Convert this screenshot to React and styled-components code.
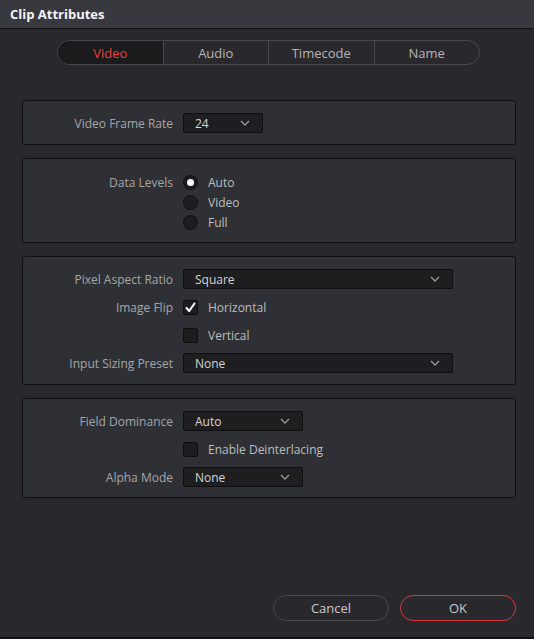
import styled, { createGlobalStyle } from "styled-components";

const GlobalStyle = createGlobalStyle`
    * { box-sizing: border-box; }
    body {
        margin: 0;
        background: #28282d;
        font-family: 'Open Sans', 'Liberation Sans', sans-serif;
    }
`

function Chevron() {
    return (
        <svg width="10" height="6" viewBox="0 0 10 6">
            <path d="M1 1 L5 5 L9 1" fill="none" stroke="#9a9a9c" strokeWidth="1.3" />
        </svg>
    )
}

function Dropdown({ value, width }) {
    return (
        <Select $width={width}>
            <span>{value}</span>
            <Chevron />
        </Select>
    )
}

function Radio({ label, checked }) {
    return (
        <Option>
            <RadioDot $checked={checked} />
            <OptionText>{label}</OptionText>
        </Option>
    )
}

function Checkbox({ label, checked }) {
    return (
        <Option>
            <Box>
                {checked && (
                    <svg width="13" height="13" viewBox="0 0 13 13">
                        <path d="M2.5 7 L5.2 10 L10.5 2.5" fill="none" stroke="#fff" strokeWidth="2" strokeLinecap="round" strokeLinejoin="round" />
                    </svg>
                )}
            </Box>
            <OptionText>{label}</OptionText>
        </Option>
    )
}

export default function App() {
    return (
        <>
            <GlobalStyle />
            <Window>
                <TitleBar>Clip Attributes</TitleBar>
                <Tabs>
                    <Tab $active>Video</Tab>
                    <Tab>Audio</Tab>
                    <Tab>Timecode</Tab>
                    <Tab>Name</Tab>
                </Tabs>
                <Panels>
                    <Panel $bottom={11}>
                        <Row>
                            <Label>Video Frame Rate</Label>
                            <Dropdown value="24" width={80} />
                        </Row>
                    </Panel>
                    <Panel $top={13} $bottom={10}>
                        <Row>
                            <Label>Data Levels</Label>
                            <Radio label="Auto" checked />
                        </Row>
                        <Row>
                            <Label />
                            <Radio label="Video" />
                        </Row>
                        <Row>
                            <Label />
                            <Radio label="Full" />
                        </Row>
                    </Panel>
                    <Panel $gap={8} $bottom={11}>
                        <Row>
                            <Label>Pixel Aspect Ratio</Label>
                            <Dropdown value="Square" width={270} />
                        </Row>
                        <Row>
                            <Label>Image Flip</Label>
                            <Checkbox label="Horizontal" checked />
                        </Row>
                        <Row>
                            <Label />
                            <Checkbox label="Vertical" />
                        </Row>
                        <Row>
                            <Label>Input Sizing Preset</Label>
                            <Dropdown value="None" width={270} />
                        </Row>
                    </Panel>
                    <Panel $gap={8} $bottom={10}>
                        <Row>
                            <Label>Field Dominance</Label>
                            <Dropdown value="Auto" width={120} />
                        </Row>
                        <Row>
                            <Label />
                            <Checkbox label="Enable Deinterlacing" />
                        </Row>
                        <Row>
                            <Label>Alpha Mode</Label>
                            <Dropdown value="None" width={120} />
                        </Row>
                    </Panel>
                </Panels>
                <Footer>
                    <Button>Cancel</Button>
                    <Button $primary>OK</Button>
                </Footer>
            </Window>
        </>
    )
}

const Window = styled.div`
    width: 534px;
    height: 639px;
    display: flex;
    flex-direction: column;
    background-color: #28282d;
    border-bottom: 2px solid #111113;
`

const TitleBar = styled.div`
    height: 29px;
    padding: 0 10px;
    display: flex;
    align-items: center;
    background-color: #38393e;
    border-bottom: 1px solid #131315;
    color: #f4f4f4;
    font-size: 13px;
    font-weight: bold;
`

const Tabs = styled.div`
    display: flex;
    width: 423px;
    height: 25px;
    margin: 11px 0 0 57px;
    border: 1px solid #47474c;
    border-radius: 13px;
    overflow: hidden;
`

const Tab = styled.div`
    flex: 1;
    display: flex;
    align-items: center;
    justify-content: center;
    font-size: 13px;
    color: ${p => p.$active ? '#e8403c' : '#b6b6b8'};
    background-color: ${p => p.$active ? '#1b1b1d' : 'transparent'};

    & + & {
        border-left: 1px solid #47474c;
    }
`

const Panels = styled.div`
    display: flex;
    flex-direction: column;
    gap: 13px;
    margin: 35px 18px 0 22px;
`

const Panel = styled.div`
    display: flex;
    flex-direction: column;
    gap: ${p => p.$gap || 0}px;
    padding: ${p => p.$top || 12}px 0 ${p => p.$bottom || 12}px;
    background-color: #2e3035;
    border: 1px solid #101012;
    border-radius: 3px;
`

const Row = styled.div`
    display: grid;
    grid-template-columns: 150px 1fr;
    column-gap: 10px;
    align-items: center;
    height: 20px;
`

const Label = styled.div`
    text-align: right;
    font-size: 12px;
    color: #a6a6a8;
`

const Select = styled.div`
    width: ${p => p.$width}px;
    height: 20px;
    display: flex;
    align-items: center;
    justify-content: space-between;
    padding: 0 12px 0 11px;
    background-color: #1e1e20;
    border: 1px solid #0e0e10;
    border-radius: 2px;
    font-size: 12px;
    color: #d4d4d6;
`

const Option = styled.div`
    display: flex;
    align-items: center;
    gap: 10px;
`

const OptionText = styled.span`
    font-size: 12px;
    color: #bdbdbf;
`

const RadioDot = styled.span`
    width: 15px;
    height: 15px;
    border-radius: 50%;
    background-color: #1d1d1f;
    border: 1px solid #111113;
    display: flex;
    align-items: center;
    justify-content: center;

    &::after {
        content: '';
        display: ${p => p.$checked ? 'block' : 'none'};
        width: 7px;
        height: 7px;
        border-radius: 50%;
        background-color: #ffffff;
    }
`

const Box = styled.span`
    width: 15px;
    height: 15px;
    border-radius: 2px;
    background-color: #1d1d1f;
    border: 1px solid #0e0e10;
    display: flex;
    align-items: center;
    justify-content: center;
`

const Footer = styled.div`
    margin-top: auto;
    display: flex;
    justify-content: flex-end;
    gap: 11px;
    padding: 0 18px 16px 0;
`

const Button = styled.div`
    width: 116px;
    height: 26px;
    display: flex;
    align-items: center;
    justify-content: center;
    border-radius: 13px;
    border: 1px solid ${p => p.$primary ? '#d8343a' : '#46464b'};
    font-size: 13px;
    color: #c8c8ca;
`
